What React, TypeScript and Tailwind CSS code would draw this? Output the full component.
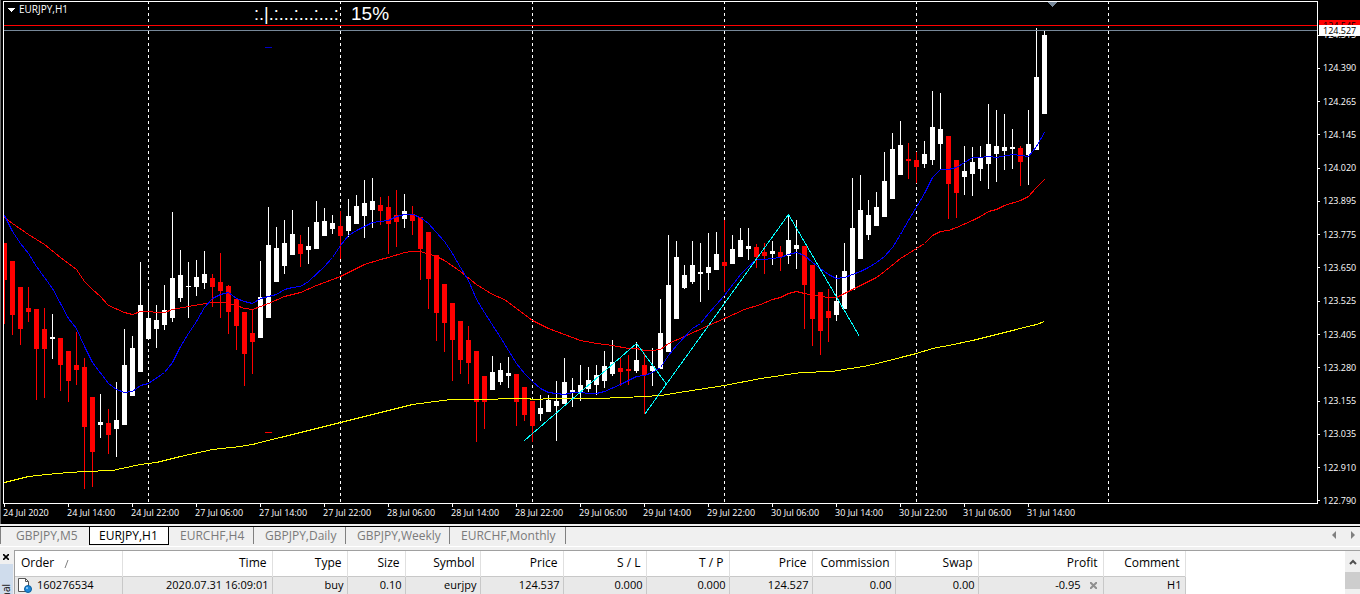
import React from "react";

// [high, bodyTop, bodyBottom, low, bullish]
type Candle = [number, number, number, number, 0 | 1];

const STEP = 8;
const FIRST_X = 4;

const candles: Candle[] = [
  [243, 243, 280, 324, 0], [261, 261, 315, 335, 0], [287, 287, 329, 345, 0], [287, 308, 312, 322, 0],
  [309, 309, 349, 400, 0], [308, 329, 349, 398, 0], [314, 337, 339, 359, 1], [338, 338, 365, 391, 0],
  [351, 351, 381, 402, 0], [332, 365, 370, 385, 0], [358, 367, 427, 489, 0], [397, 397, 452, 487, 0],
  [394, 422, 425, 438, 1], [409, 423, 435, 454, 0], [382, 420, 429, 457, 1], [329, 365, 425, 425, 1],
  [336, 348, 396, 396, 1], [262, 305, 372, 372, 1], [289, 318, 339, 339, 1], [305, 320, 329, 348, 1],
  [285, 310, 325, 330, 1], [212, 278, 318, 322, 1], [250, 275, 298, 302, 1], [262, 286, 287, 318, 1],
  [260, 277, 287, 296, 1], [251, 274, 283, 289, 1], [274, 278, 287, 307, 0], [253, 282, 291, 318, 0],
  [285, 286, 312, 334, 0], [299, 299, 326, 350, 0], [312, 312, 354, 386, 0], [310, 333, 342, 374, 0],
  [261, 297, 338, 338, 1], [207, 245, 318, 318, 1], [227, 248, 282, 282, 1], [220, 243, 266, 274, 1],
  [210, 234, 255, 255, 1], [235, 244, 254, 267, 0], [227, 246, 250, 264, 1], [201, 222, 249, 249, 1],
  [208, 221, 236, 236, 1], [215, 223, 229, 234, 1], [211, 226, 236, 259, 0], [199, 216, 231, 237, 1],
  [195, 206, 224, 224, 1], [180, 203, 216, 238, 1], [178, 201, 210, 228, 1], [197, 205, 211, 225, 0],
  [196, 207, 224, 254, 0], [190, 215, 222, 247, 0], [194, 211, 219, 228, 1], [206, 214, 221, 235, 0],
  [217, 217, 249, 280, 0], [232, 232, 279, 309, 0], [255, 255, 313, 341, 0], [284, 284, 323, 352, 0],
  [303, 303, 340, 381, 0], [321, 321, 360, 374, 0], [326, 340, 363, 384, 0], [351, 351, 402, 442, 0],
  [376, 376, 402, 429, 0], [356, 372, 390, 390, 1], [363, 370, 382, 385, 1], [357, 373, 376, 388, 1],
  [374, 374, 402, 426, 0], [387, 387, 415, 421, 0], [401, 401, 426, 442, 0], [395, 408, 414, 421, 1],
  [395, 400, 412, 412, 1], [381, 401, 406, 441, 1], [358, 382, 404, 404, 1], [378, 390, 393, 407, 1],
  [365, 385, 392, 401, 1], [367, 380, 389, 392, 1], [365, 375, 385, 395, 1], [351, 366, 381, 388, 1],
  [340, 362, 374, 376, 1], [357, 368, 372, 386, 0], [355, 369, 371, 385, 0], [342, 360, 371, 373, 1],
  [353, 365, 375, 414, 0], [348, 366, 371, 386, 1], [299, 333, 369, 369, 1], [235, 285, 352, 352, 1],
  [241, 257, 319, 319, 1], [265, 275, 288, 289, 1], [241, 265, 282, 284, 1], [243, 272, 274, 302, 1],
  [233, 267, 273, 290, 1], [232, 254, 270, 270, 1], [220, 262, 266, 292, 0], [235, 249, 264, 264, 1],
  [228, 240, 257, 257, 1], [228, 246, 249, 260, 1], [244, 247, 257, 268, 0], [243, 252, 256, 274, 0],
  [241, 251, 254, 265, 1], [246, 252, 257, 271, 0], [214, 240, 256, 264, 1], [220, 245, 249, 269, 1],
  [246, 246, 285, 329, 0], [265, 265, 319, 346, 0], [292, 292, 331, 355, 0], [289, 311, 318, 342, 0],
  [275, 301, 315, 321, 1], [243, 271, 309, 309, 1], [178, 228, 290, 290, 1], [175, 210, 259, 259, 1],
  [200, 215, 235, 240, 1], [192, 207, 226, 226, 1], [152, 181, 217, 217, 1], [133, 149, 199, 199, 1],
  [121, 145, 175, 175, 1], [143, 159, 161, 179, 0], [152, 160, 167, 183, 0], [141, 154, 164, 168, 1],
  [91, 127, 160, 165, 1], [93, 129, 144, 169, 1], [136, 136, 184, 219, 0], [160, 160, 193, 218, 0],
  [146, 171, 177, 195, 1], [147, 162, 174, 196, 1], [146, 158, 169, 181, 1], [104, 144, 164, 189, 1],
  [110, 146, 154, 182, 1], [114, 147, 151, 170, 1], [129, 147, 149, 169, 1], [146, 148, 162, 186, 0],
  [110, 144, 155, 185, 1], [28, 77, 150, 150, 1], [30, 35, 114, 114, 1],
];

const slowMa =
  "4,217 12,223 28,234 44,244 60,257 76,269 84,281 92,289 100,296 108,305 124,312 132,314 140,311 164,312 172,309 188,306 212,302 224,302 236,305 244,308 252,309 260,306 268,303 284,296 300,292 316,285 340,276 364,264 380,259 388,257 404,252 412,251 420,251 436,256 444,260 460,271 476,284 492,294 504,299 532,320 548,328 564,334 580,340 596,343 612,345 628,348 636,348 644,350 652,350 660,349 668,343 684,336 708,325 724,318 744,309 760,304 772,299 780,297 788,293 796,291 804,293 820,296 828,297 836,297 844,293 852,289 860,285 876,277 884,271 900,258 916,248 924,243 932,235 940,231 948,230 956,227 972,220 980,216 988,211 996,209 1004,205 1020,200 1028,196 1036,187 1044,179";

const fastMa =
  "4,215 12,231 20,243 28,253 36,266 52,288 60,303 68,318 76,328 84,346 92,362 108,383 116,389 124,392 132,391 140,385 148,383 164,372 172,362 180,346 188,333 196,321 204,307 212,298 220,294 228,292 236,298 244,301 252,303 260,298 268,296 276,294 284,289 292,287 300,286 308,281 324,266 332,257 340,245 348,235 356,230 364,226 372,222 388,220 396,216 404,214 412,214 420,217 428,223 444,241 452,253 460,267 468,280 476,299 484,312 500,337 516,363 524,373 532,381 540,388 548,392 564,394 572,392 596,393 604,391 620,384 636,376 644,375 652,372 660,367 668,355 676,345 692,328 700,323 708,313 724,295 740,274 748,266 756,259 764,259 780,257 788,254 796,252 804,255 812,262 828,274 836,278 844,277 860,271 868,267 876,262 884,256 892,247 900,234 908,220 924,193 932,177 940,169 948,169 956,167 972,157 980,157 988,156 996,157 1012,154 1028,156 1036,146 1044,132";

const trendMa =
  "4,482 28,476 56,473 84,471 112,470 140,464 156,462 180,456 212,449 240,446 252,444 340,422 412,404 450,399 495,399 500,398 528,398 532,399 553,398 596,398 624,397 661,395 672,393 724,385 760,378 801,372 831,371 863,366 881,362 900,357 916,353 932,348 948,345 972,340 1004,332 1036,324 1044,321";

const dayLines = [148, 340, 532, 724, 916, 1108];

const prices = [
  "124.515", "124.390", "124.265", "124.145", "124.020", "123.895", "123.775", "123.650",
  "123.525", "123.405", "123.280", "123.155", "123.035", "122.910", "122.790",
];

const times = [
  "24 Jul 2020", "24 Jul 14:00", "24 Jul 22:00", "27 Jul 06:00", "27 Jul 14:00", "27 Jul 22:00",
  "28 Jul 06:00", "28 Jul 14:00", "28 Jul 22:00", "29 Jul 06:00", "29 Jul 14:00", "29 Jul 22:00",
  "30 Jul 06:00", "30 Jul 14:00", "30 Jul 22:00", "31 Jul 06:00", "31 Jul 14:00",
];

const CandleChart: React.FC = () => (
  <svg className="block size-full" role="img" aria-label="EURJPY,H1 chart">
    <g transform="translate(-4 -2)" shapeRendering="crispEdges">
      {dayLines.map((x) => (
        <line key={x} x1={x + 0.5} x2={x + 0.5} y1={1} y2={503} stroke="#fff" strokeDasharray="3 3" />
      ))}
      {candles.map(([high, top, bottom, low, up], i) => {
        const x = FIRST_X + i * STEP;
        return (
          <g key={x} fill={up ? "#fff" : "#f00"}>
            <rect x={x} y={high} width={1} height={low - high} />
            <rect x={x - 2} y={top} width={5} height={bottom - top} />
          </g>
        );
      })}
      <g transform="translate(0.5 0.5)" fill="none">
        <polyline points={trendMa} stroke="#ff0" />
        <polyline points={slowMa} stroke="#f00" />
        <polyline points={fastMa} stroke="#00f" />
        <polyline points="524,440 636,343 667,385" stroke="#0ff" />
        <polyline points="644,414 788,214 859,336" stroke="#0ff" />
      </g>
      <rect x={265} y={47} width={7} height={1} fill="#0000c8" />
      <rect x={265} y={432} width={7} height={1} fill="#f00" />
      <rect x={4} y={25} width="100%" height={1} fill="#f00" />
      <rect x={4} y={30} width="100%" height={1} fill="#778899" />
      <path d="M1048 2h9l-4.500 5z" fill="#778899" />
      <path d="M7 8h8l-4 4z" fill="#fff" />
    </g>
    <g transform="translate(-4 -2)" fill="#fff">
      <text x={19} y={13} className="font-['Open_Sans',sans-serif] text-[10px]">EURJPY,H1</text>
      <g className="font-['Liberation_Sans',sans-serif]">
        <text x={254} y={20} className="text-[18px]">:.|.:...:...:...:</text>
        <text x={351} y={20} className="text-[19px]">15%</text>
      </g>
    </g>
  </svg>
);

const PriceAxis: React.FC = () => (
  <div className="relative flex w-[42px] flex-col justify-between pt-7 pb-[17px]">
    {prices.map((price) => (
      <div key={price} className="flex h-3 items-center gap-[3px]">
        <span className="h-px w-0.5 bg-white" />
        {price}
      </div>
    ))}
    <div className="absolute top-[19px] right-0 left-px h-3 bg-[#f00] pl-1 leading-3 text-black">
      124.545
    </div>
    <div className="absolute top-6 right-0 left-px h-[11px] bg-white pl-1 leading-[11px] text-black">
      124.527
    </div>
  </div>
);

const tabs = ["GBPJPY,M5", "EURJPY,H1", "EURCHF,H4", "GBPJPY,Daily", "GBPJPY,Weekly", "EURCHF,Monthly"];

const tabClasses = [
  "w-[89px] border-l border-[#808080] pl-[15px]",
  "w-20 border-x border-b border-black bg-white pl-[9px] text-black",
  "w-[85px] border-r border-[#808080] pl-[11px]",
  "w-[92px] border-r border-[#808080] pl-[11px]",
  "w-[104px] border-r border-[#808080] pl-[11px]",
  "w-[116px] border-r border-[#808080] pl-[11px]",
];

const ChartTabs: React.FC = () => (
  <nav className="flex h-5 items-start border-t border-black bg-[#f0f0f0] text-xs text-[#7a7a7a]">
    {tabs.map((tab, i) => (
      <button
        key={tab}
        type="button"
        className={`${i === 1 ? "h-[18px]" : "h-[17px]"} text-left leading-4 whitespace-nowrap ${tabClasses[i]}`}
      >
        {tab}
      </button>
    ))}
    <div className="ml-auto flex h-4 items-center gap-[15px] pr-[5px]">
      <button type="button" aria-label="Scroll tabs left">
        <svg className="block" width="4" height="8" fill="#808080"><path d="M4 0v8L0 4z" /></svg>
      </button>
      <button type="button" aria-label="Scroll tabs right">
        <svg className="block" width="4" height="8" fill="#808080"><path d="M0 0v8l4-4z" /></svg>
      </button>
    </div>
  </nav>
);

const columns = [
  { title: "Order", value: "160276534", width: "w-[107px]" },
  { title: "Time", value: "2020.07.31 16:09:01", width: "w-[150px]" },
  { title: "Type", value: "buy", width: "w-[75px]" },
  { title: "Size", value: "0.10", width: "w-[58px]" },
  { title: "Symbol", value: "eurjpy", width: "w-[75px]" },
  { title: "Price", value: "124.537", width: "w-[83px]" },
  { title: "S / L", value: "0.000", width: "w-[83px]" },
  { title: "T / P", value: "0.000", width: "w-[83px]" },
  { title: "Price", value: "124.527", width: "w-[83px]" },
  { title: "Commission", value: "0.00", width: "w-[83px]" },
  { title: "Swap", value: "0.00", width: "w-[83px]" },
  { title: "Profit", value: "-0.95", width: "w-[125px]" },
  { title: "Comment", value: "H1", width: "w-[82px]" },
];

const OrderIcon = () => (
  <svg width="15" height="16" viewBox="0 0 15 16" fill="none">
    <path d="M1.500 1.500h7l3 3v10h-10z" fill="#fff" stroke="#555" />
    <path d="M8.500 1.500v3h3" stroke="#555" />
    <circle cx="11" cy="12" r="3.500" fill="#1e88d8" stroke="#0c5c9c" />
    <circle cx="10" cy="11" r="1" fill="#9fd4ff" />
  </svg>
);

const Terminal: React.FC = () => (
  <section className="flex min-h-0 flex-1 overflow-hidden border-t border-white bg-[#f0f0f0] pt-[3px] text-black">
    <aside className="flex w-3.5 flex-none flex-col">
      <button type="button" aria-label="Close terminal" className="flex h-3.5 w-3 items-center justify-center">
        <svg width="6" height="6" stroke="#000" strokeWidth="1.600"><path d="M0 0l6 6M6 0L0 6" /></svg>
      </button>
      <div className="min-h-0 w-[13px] flex-1 overflow-hidden bg-[#cfdcec] pt-5 text-[10px] leading-3">
        <span className="inline-block rotate-180 [writing-mode:vertical-rl]">Terminal</span>
      </div>
    </aside>
    <div className="min-w-0 flex-1 overflow-hidden border-t border-l border-[#a0a0a0] bg-white">
      <table className="table-fixed border-collapse leading-4 whitespace-nowrap">
        <thead className="text-xs leading-4">
          <tr className="h-[25px] border-b border-[#c8c8c8]">
            {columns.map(({ title, width }, i) => (
              <th
                key={i}
                className={`${width} border-r border-[#e0e0e0] p-0 font-normal ${i === 0 ? "pl-1.5 text-left" : "pr-[5px] text-right"}`}
              >
                {title}
                {i === 0 && (
                  <svg className="ml-2.5 inline" width="5" height="8" stroke="#808080">
                    <path d="M1 8L4 0" />
                  </svg>
                )}
              </th>
            ))}
          </tr>
        </thead>
        <tbody>
          <tr className="h-[18px] bg-[#e9e9e9]">
            {columns.map(({ title, value }, i) => (
              <td
                key={i}
                className={`border-r border-[#c8c8c8] p-0 ${i === 0 ? "pl-0.5" : "pr-[3px] text-right"}`}
              >
                {i === 0 ? (
                  <div className="flex items-center gap-[5px]">
                    <OrderIcon />
                    {value}
                  </div>
                ) : title === "Profit" ? (
                  <div className="flex items-center justify-end gap-[9px] pr-[3px]">
                    {value}
                    <button type="button" aria-label="Close order">
                      <svg className="block" width="7" height="7" stroke="#909090" strokeWidth="2"><path d="M0 0l7 7M7 0L0 7" /></svg>
                    </button>
                  </div>
                ) : (
                  value
                )}
              </td>
            ))}
          </tr>
        </tbody>
      </table>
    </div>
    <div className="flex w-[15px] flex-none flex-col border-t border-[#a0a0a0]">
      <button type="button" aria-label="Scroll up" className="flex h-[21px] items-center justify-center">
        <svg width="8" height="6" fill="none" stroke="#505050" strokeWidth="2"><path d="M1 5l3-3 3 3" /></svg>
      </button>
      <div className="h-[17px] bg-[#cdcdcd]" />
    </div>
  </section>
);

const App: React.FC = () => {
  return (
    <main className="flex h-screen flex-col overflow-hidden bg-white font-['Open_Sans',sans-serif] text-[11px]">
      <section className="flex border-l border-[#696969] bg-black pt-px pl-0.5 text-[9px] leading-3 text-white">
        <div className="min-w-0 flex-1">
          <div className="h-[503px] border border-white">
            <CandleChart />
          </div>
          <div className="flex h-5 overflow-hidden">
            {times.map((time) => (
              <div key={time} className="w-16 flex-none whitespace-nowrap">
                <div className="ml-px h-[3px] w-px bg-white" />
                {time}
              </div>
            ))}
          </div>
        </div>
        <PriceAxis />
      </section>
      <div className="h-0.5 flex-none bg-[#f0f0f0]" />
      <ChartTabs />
      <Terminal />
    </main>
  );
};

export default App;
